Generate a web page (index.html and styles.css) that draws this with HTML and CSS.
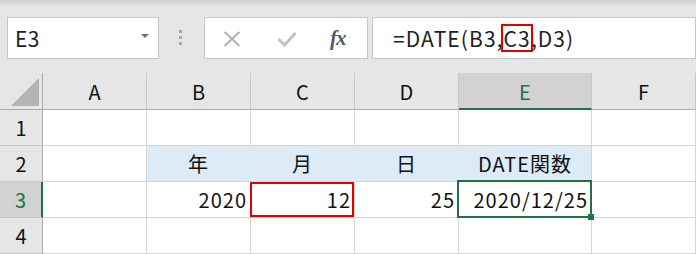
FILE: index.html
```html
<!DOCTYPE html>
<html lang="ja">
<head>
<meta charset="utf-8">
<link rel="stylesheet" href="styles.css">
</head>
<body>
<div class="app">
  <div class="toolbar">
    <div class="namebox"><span class="name">E3</span><span class="caret"></span></div>
    <div class="grip"><i></i><i></i><i></i></div>
    <div class="btns">
      <svg class="ico-x" width="18" height="16" viewBox="0 0 18 16"><path d="M1.5 1 L16.5 15 M16.5 1 L1.5 15" stroke="#b4b4b4" stroke-width="2.2" fill="none"/></svg>
      <svg class="ico-check" width="20" height="16" viewBox="0 0 20 16"><path d="M1.5 8 L7.5 14 L18.5 2" stroke="#c2c2c2" stroke-width="3" fill="none"/></svg>
      <span class="fx"><i>f</i><i>x</i></span>
    </div>
    <div class="formula">=DATE(B3,<span class="ref">C3</span>,D3)</div>
  </div>
  <div class="sheet">
    <div class="corner"><svg width="28" height="28" viewBox="0 0 28 28"><path d="M28 0 L28 28 L0 28 Z" fill="#b4b4b4"/></svg></div>
    <div class="ch">A</div>
    <div class="ch">B</div>
    <div class="ch">C</div>
    <div class="ch">D</div>
    <div class="ch sel">E</div>
    <div class="ch">F</div>

    <div class="rh">1</div>
    <div class="c"></div><div class="c"></div><div class="c"></div><div class="c"></div><div class="c"></div><div class="c"></div>

    <div class="rh">2</div>
    <div class="c"></div>
    <div class="c fill center">年</div>
    <div class="c fill center">月</div>
    <div class="c fill center">日</div>
    <div class="c fill last center">DATE関数</div>
    <div class="c"></div>

    <div class="rh sel">3</div>
    <div class="c"></div>
    <div class="c num">2020</div>
    <div class="c num redbox">12</div>
    <div class="c num">25</div>
    <div class="c num active">2020/12/25<span class="handle"></span></div>
    <div class="c"></div>

    <div class="rh">4</div>
    <div class="c"></div><div class="c"></div><div class="c"></div><div class="c"></div><div class="c"></div><div class="c"></div>
  </div>
</div>
</body>
</html>
```

FILE: styles.css
```css
* { box-sizing: border-box; }
html, body { margin: 0; padding: 0; }
body {
  width: 696px;
  height: 254px;
  overflow: hidden;
  font-family: "Noto Sans CJK JP", "Noto Sans", sans-serif;
  color: #1a1a1a;
  background: #e6e6e6;
}
.app { width: 696px; height: 254px; }

.toolbar {
  height: 73px;
  display: flex;
  align-items: flex-start;
  padding: 17px 0 0 7px;
  background: linear-gradient(#d2d2d2 0, #dddddd 4px, #e6e6e6 6px);
}
.namebox {
  width: 152px;
  height: 42px;
  background: #fff;
  border: 1px solid #c6c6c6;
  display: flex;
  align-items: center;
  justify-content: space-between;
  padding: 0 9px 0 7px;
}
.name { font-size: 21px; line-height: 1; color: #222; padding-top: 1px; letter-spacing: 0.5px; }
.caret {
  width: 0; height: 0;
  border-left: 4px solid transparent;
  border-right: 4px solid transparent;
  border-top: 4px solid #6e6e6e;
  margin-bottom: 4px;
}
.grip {
  margin-left: 20px;
  margin-top: 13px;
  display: flex;
  flex-direction: column;
  gap: 3px;
}
.grip i { display: block; width: 3px; height: 3px; background: #a8a8a8; }
.btns {
  margin-left: 22px;
  width: 164px;
  height: 42px;
  background: #fff;
  border: 1px solid #c6c6c6;
  display: flex;
  align-items: center;
  padding-left: 18px;
}
.ico-x { margin-top: 2px; }
.ico-check { margin-left: 36px; margin-top: 2px; }
.fx {
  margin-left: 33px;
  font-family: "Liberation Serif", serif;
  font-style: italic;
  font-weight: bold;
  font-size: 21px;
  color: #5a5a5a;
  line-height: 1;
  letter-spacing: -1px;
}
.fx i { font-style: italic; }
.formula {
  margin-left: 4px;
  flex: 1;
  height: 42px;
  background: #fff;
  border: 1px solid #c6c6c6;
  padding-left: 20px;
  font-size: 21px;
  line-height: 40px;
  letter-spacing: 1.1px;
  color: #222;
  white-space: nowrap;
}
.ref {
  display: inline-block;
  line-height: 24px;
  border: 2px solid #e00000;
  padding: 0 0 0 1px;
  margin: 0 -2px 0 -3px;
}

.sheet {
  display: grid;
  grid-template-columns: 43px 104px 104px 104px 104px 133px 104px;
  grid-template-rows: 37px 36px 36px 36px 36px;
  background: #fff;
  font-size: 20px;
}
.corner {
  background: #e6e6e6;
  border-right: 1px solid #ababab;
  border-bottom: 1px solid #ababab;
  display: flex;
  align-items: flex-end;
  justify-content: flex-end;
  padding: 0 3px 3px 0;
}
.ch {
  background: #e6e6e6;
  border-right: 1px solid #c8c8c8;
  border-bottom: 1px solid #ababab;
  display: flex;
  align-items: center;
  justify-content: center;
  color: #111;
  padding-top: 1px;
}
.ch.sel {
  background: #d2d2d2;
  border-bottom: 2px solid #217346;
  color: #217346;
  padding-top: 2px;
}
.rh {
  background: #e6e6e6;
  border-right: 1px solid #ababab;
  border-bottom: 1px solid #c8c8c8;
  display: flex;
  align-items: center;
  justify-content: center;
  color: #111;
}
.rh.sel {
  background: #d2d2d2;
  border-right: 2px solid #217346;
  color: #217346;
}
.c {
  border-right: 1px solid #d4d4d4;
  border-bottom: 1px solid #d4d4d4;
  display: flex;
  align-items: center;
  position: relative;
  color: #111;
  white-space: nowrap;
  letter-spacing: 1px;
}
.fill { background: #ddebf7; border-right-color: #ddebf7; }
.fill.last { border-right-color: #d4d4d4; }
.center { justify-content: center; }
.num { justify-content: flex-end; padding-right: 3px; }
.redbox::after {
  content: "";
  position: absolute;
  left: -1px; top: 0; right: 0; bottom: 0;
  border: 2px solid #e00000;
}
.active::after {
  content: "";
  position: absolute;
  left: -2px; top: -2px; right: -1px; bottom: -1px;
  border: 2px solid #217346;
}
.handle {
  position: absolute;
  right: -3px;
  bottom: -3px;
  width: 6px;
  height: 6px;
  background: #217346;
  z-index: 2;
}
```
